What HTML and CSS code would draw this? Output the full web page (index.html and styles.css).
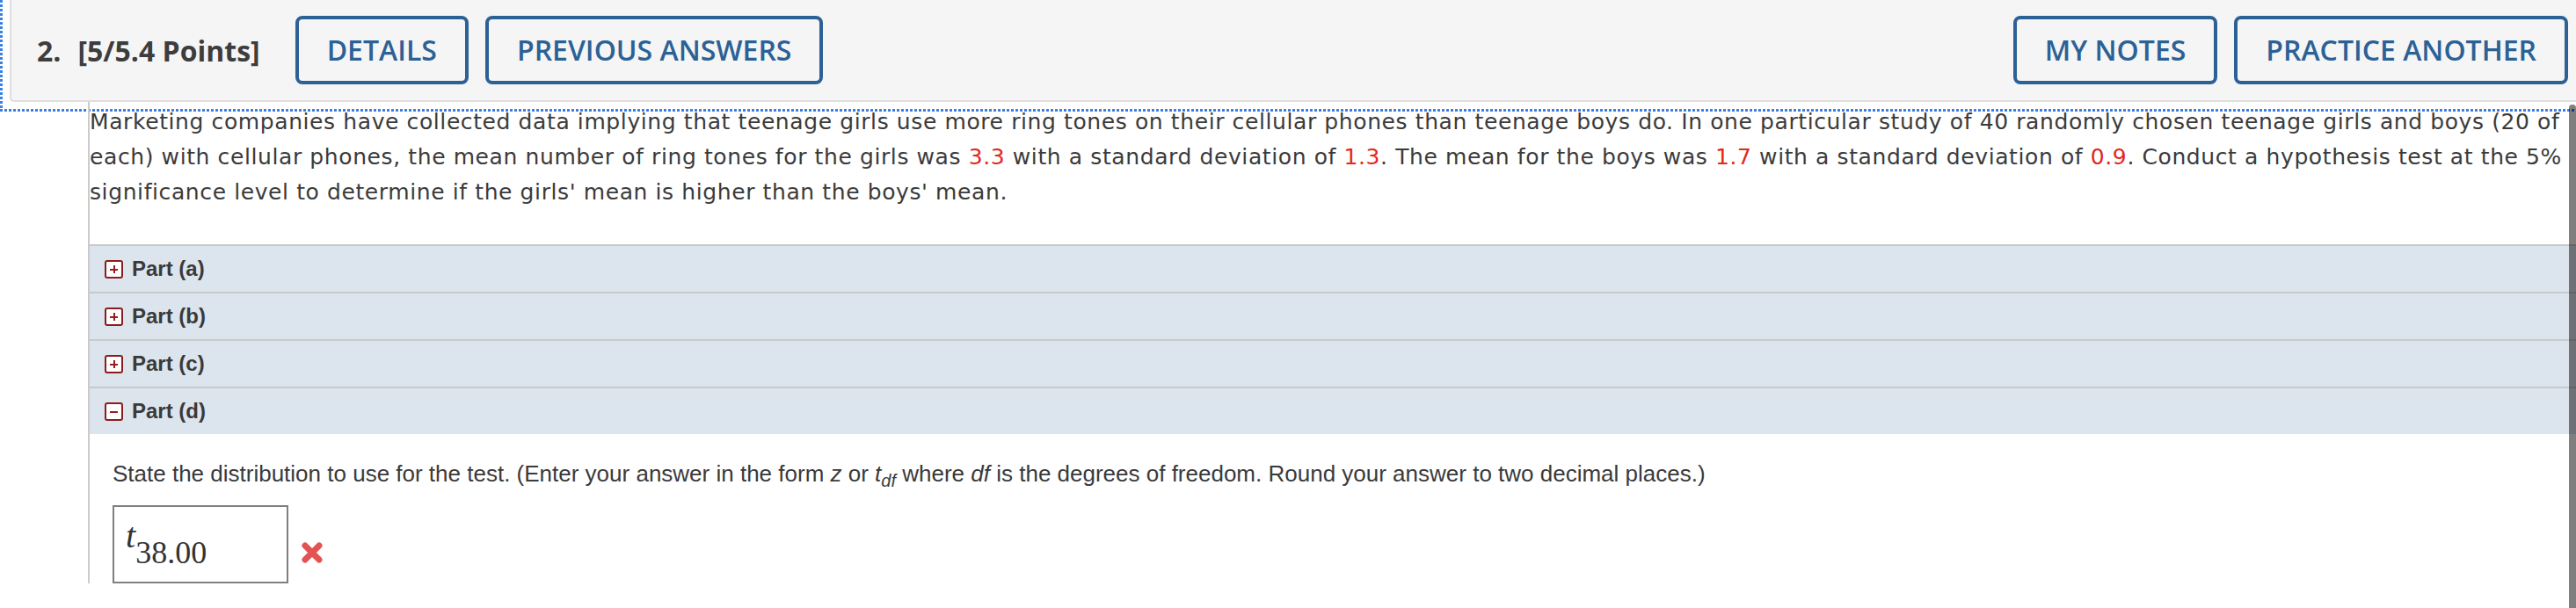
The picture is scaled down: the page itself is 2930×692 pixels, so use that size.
FILE: index.html
```html
<!DOCTYPE html>
<html lang="en">

<head>
  <meta charset="UTF-8" />
  <title>Question 2</title>
  <link rel="stylesheet" href="styles.css">
</head>

<body>
  <div class="question">
    <div class="q-head-wrap">
      <div class="q-head">
        <span class="q-num">2.</span>
        <span class="q-points">[5/5.4 Points]</span>
        <div class="head-buttons">
          <a class="btn" href="#">DETAILS</a>
          <a class="btn" href="#">PREVIOUS ANSWERS</a>
        </div>
        <div class="head-buttons right">
          <a class="btn" href="#">MY NOTES</a>
          <a class="btn" href="#">PRACTICE ANOTHER</a>
        </div>
      </div>
    </div>

    <div class="q-body">
      <p class="problem">Marketing companies have collected data implying that teenage girls use more ring tones on their cellular phones than teenage boys do. In one particular study of 40 randomly chosen teenage girls and boys (20 of each) with cellular phones, the mean number of ring tones for the girls was <span class="num">3.3</span> with a standard deviation of <span class="num">1.3</span>. The mean for the boys was <span class="num">1.7</span> with a standard deviation of <span class="num">0.9</span>. Conduct a hypothesis test at the 5% significance level to determine if the girls' mean is higher than the boys' mean.</p>

      <div class="parts">
        <div class="part"><span class="toggle"><span class="bar"></span><span class="bar vert"></span></span>Part (a)</div>
        <div class="part"><span class="toggle"><span class="bar"></span><span class="bar vert"></span></span>Part (b)</div>
        <div class="part"><span class="toggle"><span class="bar"></span><span class="bar vert"></span></span>Part (c)</div>
        <div class="part"><span class="toggle"><span class="bar"></span></span>Part (d)</div>

        <div class="part-content">
          <p class="prompt">State the distribution to use for the test. (Enter your answer in the form <i>z</i> or <i>t</i><sub><i>df</i></sub> where <i>df</i> is the degrees of freedom. Round your answer to two decimal places.)</p>
          <div class="answer-row">
            <div class="answer-box"><span class="math-t">t</span><span class="math-sub">38.00</span></div>
            <svg class="wrong" width="28" height="28" viewBox="0 0 28 28">
              <path d="M6 6 L22 22 M22 6 L6 22" stroke="#e35353" stroke-width="7" stroke-linecap="round" />
            </svg>
          </div>
        </div>
      </div>
    </div>

    <div class="scroll-thumb"></div>
  </div>
</body>

</html>
```

FILE: styles.css
```css
body {
  margin: 0;
  background: #fff;
  color: #3b3b3b;
  font-family: 'DejaVu Sans', Verdana, sans-serif;
  overflow: hidden;
}

.question {
  position: relative;
  height: 692px;
}

/* focus ring drawn as dotted lines on the left and bottom */
.q-head-wrap {
  padding: 0 0 11px 11px;
  background-image:
    linear-gradient(to right, #3b7fe2 3px, transparent 3px),
    linear-gradient(to bottom, #3b7fe2 3px, transparent 3px);
  background-size: 5px 3px, 3px 5px;
  background-repeat: repeat-x, repeat-y;
  background-position: left bottom, left top;
}

.q-head {
  display: flex;
  align-items: center;
  height: 114px;
  padding: 0 9px 0 29px;
  background: #f5f5f5;
  border-left: 2px solid #dedede;
  border-bottom: 2px solid #dedede;
  border-bottom-left-radius: 5px;
  font-family: 'Open Sans', sans-serif;
}

.q-num,
.q-points {
  font-size: 32px;
  font-weight: 700;
  color: #3d3d3d;
}

.q-num {
  margin-right: 19px;
}

.q-points {
  margin-right: 40px;
}

.head-buttons {
  display: flex;
  gap: 19px;
}

.head-buttons.right {
  margin-left: auto;
}

.btn {
  display: block;
  height: 78px;
  box-sizing: border-box;
  padding: 0 32px;
  border: 4px solid #2c6196;
  border-radius: 8px;
  color: #2c6196;
  font-size: 32px;
  font-weight: 600;
  line-height: 70px;
  text-decoration: none;
}

.q-body {
  margin: -11px 0 0 100px;
  border-left: 2px solid #cbcbcb;
  padding-top: 3px;
}

.problem {
  margin: 0 -24px 0 0;
  font-size: 25px;
  letter-spacing: 0.6px;
  line-height: 40px;
}

.num {
  color: #e3281c;
}

.parts {
  margin-top: 39px;
  font-family: 'Liberation Sans', Arial, sans-serif;
  color: #3a3a3a;
}

.part {
  display: flex;
  align-items: center;
  gap: 10px;
  height: 52px;
  padding-left: 17px;
  border-top: 2px solid #c9c9c9;
  background: #dce5ee;
  font-size: 24px;
  font-weight: 700;
}

.toggle {
  position: relative;
  width: 21px;
  height: 21px;
  box-sizing: border-box;
  border: 2px solid #8c1c1c;
  border-radius: 3px;
  background: #fff;
}

.toggle .bar {
  position: absolute;
  left: 4px;
  top: 8px;
  width: 9px;
  height: 2px;
  background: #9a1d1d;
}

.toggle .bar.vert {
  left: 7.5px;
  top: 4.5px;
  width: 2px;
  height: 9px;
}

.part-content {
  padding: 30px 0 0 26px;
}

.prompt {
  margin: 0;
  font-size: 26px;
  line-height: 30px;
}

.prompt sub {
  font-size: 20px;
  line-height: 0;
}

.answer-row {
  display: flex;
  align-items: flex-start;
  margin-top: 21px;
}

.answer-box {
  display: flex;
  align-items: flex-start;
  width: 200px;
  height: 89px;
  box-sizing: border-box;
  padding: 13px 0 0 13px;
  border: 2px solid #7f7f7f;
  font-family: 'Liberation Serif', 'Times New Roman', serif;
  color: #333;
}

.math-t {
  font-size: 40px;
  font-style: italic;
  line-height: 40px;
}

.math-sub {
  margin-top: 21px;
  font-size: 36px;
  line-height: 36px;
}

.wrong {
  margin: 40px 0 0 13px;
}

.scroll-thumb {
  position: absolute;
  top: 119px;
  right: 0;
  bottom: 0;
  width: 8px;
  border-radius: 4px 4px 0 0;
  background: rgba(0, 0, 0, 0.5);
}
```
